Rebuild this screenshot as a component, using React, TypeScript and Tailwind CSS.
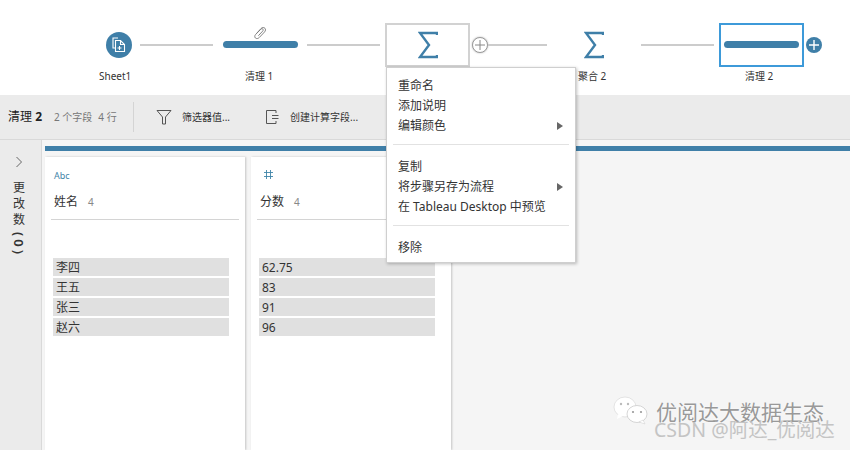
import React from 'react';

const FONT = "font-['Noto_Sans','Noto_Sans_CJK_SC',sans-serif]";

const NAMES = ['李四', '王五', '张三', '赵六'];
const SCORES = ['62.75', '83', '91', '96'];

function Sigma() {
  return (
    <svg width="20" height="28" viewBox="0 0 20 28" fill="none" stroke="#3f7fa8" strokeWidth="2.4">
      <path d="M19 4 V2 H2 L11 14 L2 26 H19 V24" />
    </svg>
  );
}

function Line({ width }: { width: string }) {
  return <div className={`h-[2px] bg-[#cccccc] ${width}`} />;
}

function NodeLabel({ children, className }: { children: React.ReactNode; className: string }) {
  return <div className={`absolute top-[69px] text-[10px] leading-[14px] text-[#333] whitespace-nowrap ${className}`}>{children}</div>;
}

function Column({ icon, title, rows, width }: { icon: React.ReactNode; title: string; rows: string[]; width: string }) {
  return (
    <div className={`bg-white h-full shadow-[1px_0_2px_rgba(0,0,0,0.2)] ${width}`}>
      <div className="h-[37px] pl-[9px] pt-[13px] flex items-start">{icon}</div>
      <div className="h-[26px] ml-[6px] mr-[6px] pl-[3px] flex items-start gap-[10px] border-b border-[#d4d4d4]">
        <span className="text-[12px] leading-[16px] text-[#333]">{title}</span>
        <span className="text-[10px] leading-[16px] text-[#888]">4</span>
      </div>
      <div className="mt-[38px] ml-[8px] w-[176px] flex flex-col gap-[2px]">
        {rows.map(r => (
          <div key={r} className="h-[18px] bg-[#e0e0e0] pl-[3px] text-[12px] leading-[20px] text-[#333]">{r}</div>
        ))}
      </div>
    </div>
  );
}

function MenuItem({ label, arrow }: { label: string; arrow?: boolean }) {
  return (
    <div className="h-[20px] pl-[11px] pr-[12px] flex items-center justify-between text-[12px] text-[#333]">
      <span>{label}</span>
      {arrow && <span className="w-0 h-0 border-y-[4px] border-y-transparent border-l-[6px] border-l-[#666]" />}
    </div>
  );
}

export default function App() {
  return (
    <div className={`relative w-[850px] h-[450px] overflow-hidden bg-[#f5f5f5] ${FONT}`}>
      {/* Flow canvas */}
      <div className="relative h-[95px] bg-white">
        <div className="flex items-center h-[89px] pl-[106px]">
          <div className="w-[26px] h-[26px] rounded-full bg-[#3f7fa8] flex items-center justify-center">
            <svg width="16" height="16" viewBox="0 0 16 16" fill="none" stroke="#fff" strokeWidth="1.1">
              <path d="M7 1 H2 V11 H4.5" />
              <path d="M4.5 3.5 H9.5 L13.5 7.5 V14.5 H4.5 Z" />
              <path d="M9.5 3.5 V7.5 H13.5" />
              <path d="M8.5 9 V13 M6.5 11 H10.5" />
            </svg>
          </div>
          <div className="w-[8px]" />
          <Line width="w-[73px]" />
          <div className="w-[10px]" />
          <div className="w-[75px] h-[7px] rounded-full bg-[#3f7fa8]" />
          <div className="w-[9px]" />
          <Line width="w-[73px]" />
          <div className="w-[5px]" />
          <div className="w-[85px] h-[44px] border-2 border-[#d2d2d2] bg-white flex items-center justify-center">
            <Sigma />
          </div>
          <div className="w-[2px]" />
          <div className="w-[16px] h-[16px] rounded-full border border-[#999] bg-white shadow-[0_0_2px_rgba(0,0,0,0.3)] flex items-center justify-center shrink-0">
            <svg width="10" height="10" viewBox="0 0 10 10" stroke="#888" strokeWidth="1"><path d="M5 0 V10 M0 5 H10" /></svg>
          </div>
          <Line width="w-[59px]" />
          <div className="w-[37px]" />
          <Sigma />
          <div className="w-[37px]" />
          <Line width="w-[73px]" />
          <div className="w-[5px]" />
          <div className="w-[85px] h-[44px] border-2 border-[#3d9ad9] bg-white flex items-center justify-center">
            <div className="w-[75px] h-[7px] rounded-full bg-[#3f7fa8]" />
          </div>
          <div className="w-[2px]" />
          <div className="w-[16px] h-[16px] rounded-full bg-[#3f7fa8] flex items-center justify-center shrink-0">
            <svg width="10" height="10" viewBox="0 0 10 10" stroke="#fff" strokeWidth="1.4"><path d="M5 0 V10 M0 5 H10" /></svg>
          </div>
        </div>
        <NodeLabel className="left-[99px]">Sheet1</NodeLabel>
        <NodeLabel className="left-[245px]">清理 1</NodeLabel>
        <NodeLabel className="left-[578px]">聚合 2</NodeLabel>
        <NodeLabel className="left-[745px]">清理 2</NodeLabel>
        <svg className="absolute left-[253px] top-[26px]" width="14" height="14" viewBox="0 0 14 14" fill="none" stroke="#777" strokeWidth="0.9">
          <path d="M3.5 7.5 L8 2.5 C9.2 1.2 11.2 1.4 12 2.3 C12.8 3.2 12.6 4.8 11.6 5.9 L6.4 11.4 C5.2 12.7 3.4 12.9 2.4 12 C1.5 11.1 1.6 9.6 2.6 8.5 L7.8 3.2 C8.4 2.6 9.4 2.6 9.9 3.1 C10.4 3.7 10.2 4.5 9.7 5.1 L5.4 9.7" />
        </svg>
      </div>

      {/* Toolbar */}
      <div className="h-[45px] bg-[#ebebeb] border-b border-[#d9d9d9] flex items-center">
        <div className="w-[134px] pl-[8px] flex items-baseline border-r border-[#d4d4d4] h-[30px] pt-[6px]">
          <span className="text-[12px] text-[#222] whitespace-nowrap">清理 <span className="font-bold">2</span></span>
          <span className="ml-[12px] text-[10px] text-[#777] whitespace-nowrap">2 个字段</span>
          <span className="ml-[6px] text-[10px] text-[#777] whitespace-nowrap">4 行</span>
        </div>
        <div className="ml-[22px] flex items-center gap-[10px]">
          <svg width="16" height="16" viewBox="0 0 16 16" fill="none" stroke="#555" strokeWidth="1">
            <path d="M1 1.5 H15 L9.5 8 V15 H6.5 V8 Z" />
          </svg>
          <span className="text-[10px] text-[#333] whitespace-nowrap">筛选器值...</span>
        </div>
        <div className="ml-[35px] flex items-center gap-[11px]">
          <svg width="14" height="16" viewBox="0 0 14 16" fill="none" stroke="#555" strokeWidth="1">
            <path d="M11 4 V1.5 H1.5 V14.5 H11 V12" />
            <path d="M7 6.5 H13.5 M7 9.5 H13.5" />
          </svg>
          <span className="text-[10px] text-[#333] whitespace-nowrap">创建计算字段...</span>
        </div>
      </div>

      {/* Body */}
      <div className="flex h-[310px]">
        <div className="w-[42px] shrink-0 bg-[#ebebeb] border-r border-[#d9d9d9] pr-[3px] flex flex-col items-center">
          <svg className="mt-[16px]" width="8" height="12" viewBox="0 0 8 12" fill="none" stroke="#666" strokeWidth="1">
            <path d="M1.5 1 L6.5 6 L1.5 11" />
          </svg>
          <div className="mt-[12px] w-[14px] text-[12px] leading-[16px] text-[#333] text-center">更改数</div>
          <div className="mt-[4px] text-[13px] leading-[14px] tracking-[3px] text-[#333] font-semibold [writing-mode:vertical-lr]">(0)</div>
        </div>
        <div className="flex-1 min-w-0 pl-[3px] pt-[6px]">
          <div className="h-[5px] bg-[#3f7fa8]" />
          <div className="mt-[6px] flex gap-[6px] h-[293px]">
            <Column
              width="w-[200px]"
              title="姓名"
              rows={NAMES}
              icon={<span className="text-[9px] leading-[12px] text-[#3f84a8]">Abc</span>}
            />
            <Column
              width="w-[200px]"
              title="分数"
              rows={SCORES}
              icon={
                <svg className="ml-[3px] -mt-[1px]" width="11" height="11" viewBox="0 0 11 11" stroke="#3f84a8" strokeWidth="0.9">
                  <path d="M3.5 1 V10 M7.5 1 V10 M1 3.5 H10 M1 7.5 H10" />
                </svg>
              }
            />
          </div>
        </div>
      </div>

      {/* Context menu */}
      <div className="absolute left-[386px] top-[67px] w-[190px] h-[196px] bg-white border border-[#cfcfcf] shadow-[1px_1px_3px_rgba(0,0,0,0.25)] pt-[8px]">
        <MenuItem label="重命名" />
        <MenuItem label="添加说明" />
        <MenuItem label="编辑颜色" arrow />
        <div className="mx-[6px] mt-[8px] mb-[12px] h-px bg-[#e2e2e2]" />
        <MenuItem label="复制" />
        <MenuItem label="将步骤另存为流程" arrow />
        <MenuItem label="在 Tableau Desktop 中预览" />
        <div className="mx-[6px] mt-[8px] mb-[12px] h-px bg-[#e2e2e2]" />
        <MenuItem label="移除" />
      </div>

      {/* Watermark */}
      <svg className="absolute left-[613px] top-[396px]" width="36" height="30" viewBox="0 0 36 30">
        <ellipse cx="12" cy="11" rx="11" ry="10" fill="#fff" stroke="#ddd" strokeWidth="0.8" />
        <path d="M5 18 L4 23 L10 20 Z" fill="#fff" />
        <ellipse cx="24" cy="18" rx="10" ry="8.5" fill="#fff" stroke="#ccc" strokeWidth="0.8" />
        <path d="M30 24 L32 28 L26 26 Z" fill="#fff" stroke="#ccc" strokeWidth="0.5" />
        <circle cx="8" cy="8" r="1.2" fill="#bbb" />
        <circle cx="15" cy="8" r="1.2" fill="#bbb" />
        <circle cx="20" cy="16" r="1.1" fill="#999" />
        <circle cx="28" cy="16" r="1.1" fill="#999" />
      </svg>
      <div className="absolute left-[656px] top-[403px] text-[21px] leading-[18px] text-[#999] whitespace-nowrap [text-shadow:0_0_2px_#fff]">优阅达大数据生态</div>
      <div className="absolute left-[654px] top-[421px] text-[19.5px] leading-[18px] text-[#c4c4c4] whitespace-nowrap">CSDN @阿达_优阅达</div>
    </div>
  );
}
